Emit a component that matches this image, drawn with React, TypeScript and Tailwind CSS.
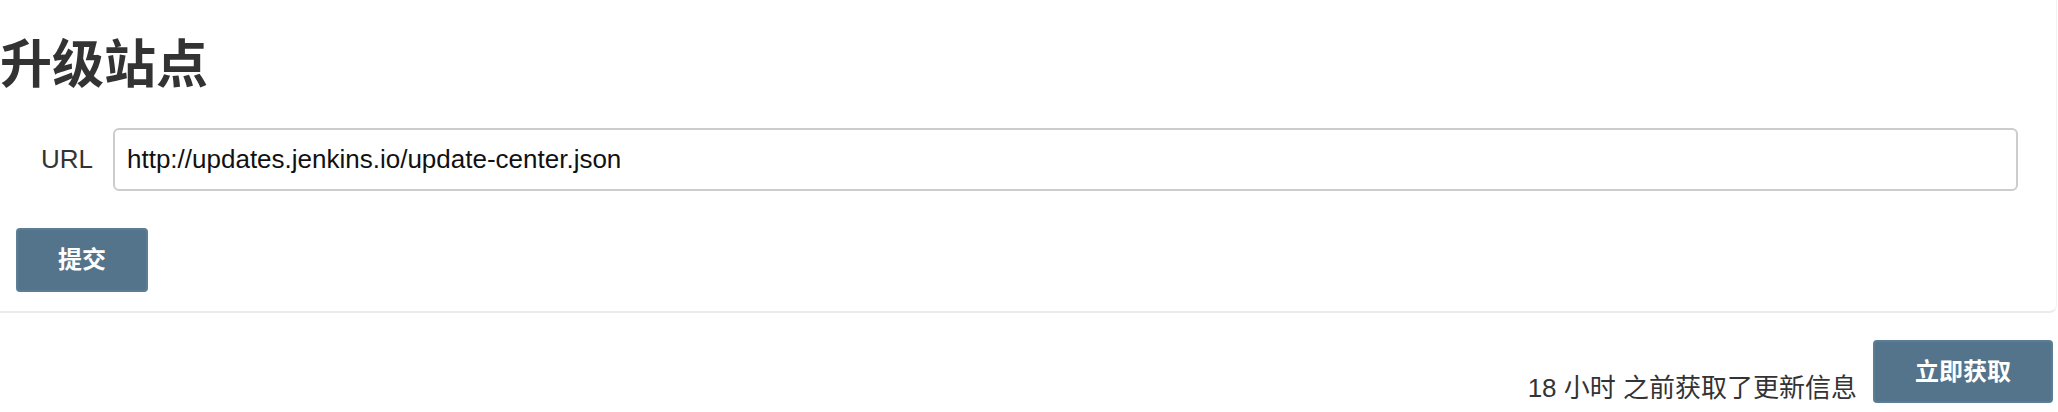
export default function App() {
  return (
    <div className="w-[2058px] h-[412px] overflow-hidden bg-white text-[#333] font-['Liberation_Sans','Noto_Sans_CJK_SC',sans-serif]">
      <div className="w-[2057px] border-r border-r-[#f2f2f2] border-b-2 border-b-[#ececec] rounded-br-lg pb-[19px]">
        <h1 className="pt-[39px] text-[52px] font-bold leading-none">升级站点</h1>

        <div className="flex items-center mt-[37px]">
          <label className="w-[113px] pl-[41px] text-[26px]">URL</label>
          <input
            readOnly
            defaultValue="http://updates.jenkins.io/update-center.json"
            className="w-[1905px] h-[63px] border-2 border-[#cccccc] rounded-md px-[12px] text-[26px] text-[#111] outline-none"
          />
        </div>

        <button className="ml-[16px] mt-[37px] w-[132px] h-[64px] rounded-sm border-2 border-[#5b7e96] bg-[#53748a] text-white text-[24px] font-bold">
          提交
        </button>
      </div>

      <div className="flex justify-end items-end gap-[16px] pr-[5px] mt-[27px]">
        <span className="text-[26px] leading-none pb-[2px]">18 小时 之前获取了更新信息</span>
        <button className="w-[180px] h-[63px] rounded-sm border-2 border-[#5b7e96] bg-[#53748a] text-white text-[24px] font-bold">
          立即获取
        </button>
      </div>
    </div>
  )
}
